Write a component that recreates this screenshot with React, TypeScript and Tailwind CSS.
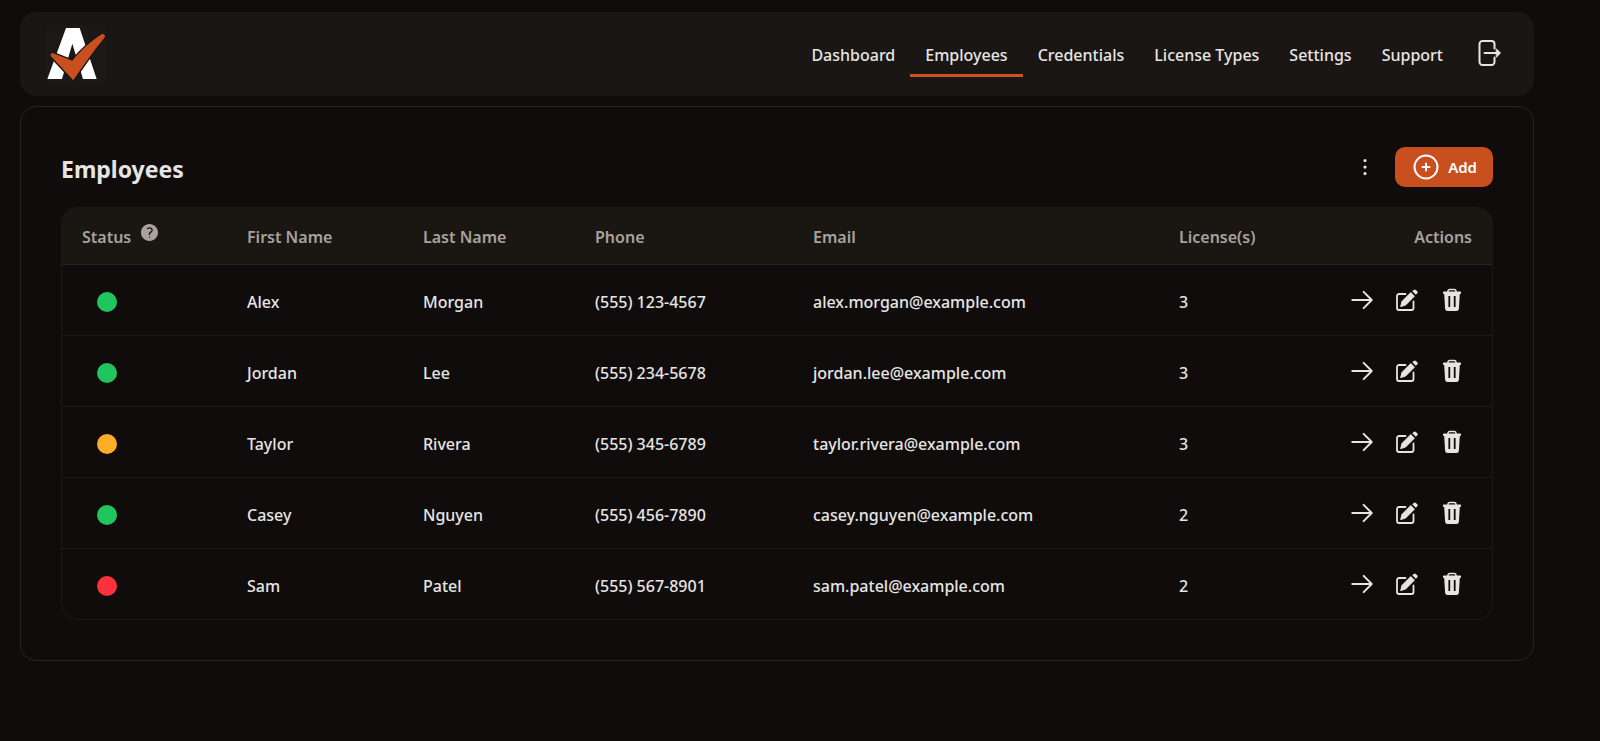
import type { ReactNode } from "react";
import {
  HiEllipsisVertical,
  HiOutlineArrowRight,
  HiQuestionMarkCircle,
} from "react-icons/hi2";

type Status = "valid" | "expiring" | "expired";

interface Employee {
  status: Status;
  first: string;
  last: string;
  phone: string;
  email: string;
  licenses: number;
}

const employees: Employee[] = [
  { status: "valid", first: "Alex", last: "Morgan", phone: "(555) 123-4567", email: "alex.morgan@example.com", licenses: 3 },
  { status: "valid", first: "Jordan", last: "Lee", phone: "(555) 234-5678", email: "jordan.lee@example.com", licenses: 3 },
  { status: "expiring", first: "Taylor", last: "Rivera", phone: "(555) 345-6789", email: "taylor.rivera@example.com", licenses: 3 },
  { status: "valid", first: "Casey", last: "Nguyen", phone: "(555) 456-7890", email: "casey.nguyen@example.com", licenses: 2 },
  { status: "expired", first: "Sam", last: "Patel", phone: "(555) 567-8901", email: "sam.patel@example.com", licenses: 2 },
];

const statusColor: Record<Status, string> = {
  valid: "bg-[#21c55d]",
  expiring: "bg-[#faad26]",
  expired: "bg-[#fb323b]",
};

const navItems = ["Dashboard", "Employees", "Credentials", "License Types", "Settings", "Support"];

function Logo() {
  return (
    <svg viewBox="33 30 180 174" className="h-[58px] w-15" aria-hidden="true">
      <rect x="33" y="30" width="180" height="174" rx="14" fill="#1a1918" />
      <path d="M93 39h41l51 153h-41L112 86 81 192H37z" fill="#fff" />
      <path
        d="M53 114 112 137C135 108 168 78 201 57q9-1 9 9C178 104 146 150 115 196L47 123q-1-9 6-9z"
        fill="#c94f1e"
        stroke="#191613"
        strokeWidth="8"
        paintOrder="stroke"
        strokeLinejoin="round"
      />
    </svg>
  );
}

function LogoutIcon() {
  return (
    <svg viewBox="0 0 24 26" className="h-[26px] w-6" fill="none" stroke="currentColor" strokeWidth="2" strokeLinecap="round" aria-hidden="true">
      <path d="M16.500 8.500V4a3 3 0 0 0-3-3h-9a3 3 0 0 0-3 3v18a3 3 0 0 0 3 3h9a3 3 0 0 0 3-3v-4.500" />
      <path d="M6.500 13h14" />
      <path d="M18.500 9 22.500 13l-4 4z" fill="currentColor" strokeWidth="1" strokeLinejoin="round" />
    </svg>
  );
}

function EditIcon() {
  return (
    <svg viewBox="0 0 22 22" className="size-[22px]" aria-hidden="true">
      <path
        d="M9.500 5H3a2 2 0 0 0-2 2v12a2 2 0 0 0 2 2h12.500a2 2 0 0 0 2-2v-6.500"
        fill="none"
        stroke="currentColor"
        strokeWidth="1.800"
        strokeLinecap="round"
      />
      <path d="M14.800 3.600 18.400 7.200 9.600 16 4.700 17.600 6 12.400z" fill="currentColor" stroke="currentColor" strokeWidth="1" strokeLinejoin="round" />
      <path d="M16.300 2.200 17.700.9a1.600 1.600 0 0 1 2.200 0l1.300 1.300a1.600 1.600 0 0 1 0 2.200L19.800 5.700z" fill="currentColor" />
    </svg>
  );
}

function TrashIcon() {
  return (
    <svg viewBox="0 0 20 24" className="h-6 w-5" aria-hidden="true">
      <path d="M6 4V3.200A1.700 1.700 0 0 1 7.700 1.500h4.600A1.700 1.700 0 0 1 14 3.200V4" fill="none" stroke="currentColor" strokeWidth="1.500" />
      <path
        fillRule="evenodd"
        fill="currentColor"
        d="M1.800 3.500h16.400a.8.800 0 0 1 .8.800v.9a.8.800 0 0 1-.8.800h-.4L16.900 20.700a2.500 2.500 0 0 1-2.500 2.300H5.600a2.500 2.500 0 0 1-2.500-2.300L2.200 6h-.4a.8.800 0 0 1-.8-.8v-.9a.8.800 0 0 1 .8-.8zM6.400 8v11h1.800V8zM11.800 8v11h1.800V8z"
      />
    </svg>
  );
}

function PlusCircleIcon() {
  return (
    <svg viewBox="0 0 26 26" className="size-[26px]" fill="none" stroke="currentColor" strokeWidth="2" strokeLinecap="round" aria-hidden="true">
      <circle cx="13" cy="13" r="11.500" />
      <path d="M13 9.500v7M9.500 13h7" />
    </svg>
  );
}

function IconButton({ label, children }: { label: string; children: ReactNode }) {
  return (
    <button type="button" aria-label={label} className="flex h-7 w-[45px] items-center justify-center text-stone-200">
      {children}
    </button>
  );
}

export default function App() {
  return (
    <div className="min-h-screen bg-[#0f0c0b] pt-3 pr-[66px] pb-20 pl-5 font-['Noto_Sans','Open_Sans',sans-serif] text-base font-medium text-stone-200">
      <header className="flex h-[84px] items-center justify-between rounded-2xl bg-[#191613] pr-6 pl-[26px]">
        <a href="#home" aria-label="Home">
          <Logo />
        </a>
        <div className="flex items-center pb-[3px]">
          <nav className="flex">
            {navItems.map((item) => (
              <a
                key={item}
                href="#nav"
                aria-current={item === "Employees" ? "page" : undefined}
                className={
                  item === "Employees"
                    ? "border-b-3 border-[#d0521f] px-[15px] pt-[14px] pb-[7px]"
                    : "border-b-3 border-transparent px-[15px] pt-[14px] pb-[7px]"
                }
              >
                {item}
              </a>
            ))}
          </nav>
          <button type="button" aria-label="Log out" className="ml-3 flex size-10 items-center justify-center">
            <LogoutIcon />
          </button>
        </div>
      </header>

      <main className="mt-[10px] rounded-2xl border border-[#262321] p-10">
        <div className="flex h-10 items-center justify-between">
          <h1 className="pt-1 text-[23px] font-bold">Employees</h1>
          <div className="flex items-center gap-4">
            <button type="button" aria-label="More options" className="flex size-7 items-center justify-center">
              <HiEllipsisVertical size={26} />
            </button>
            <button type="button" className="flex h-10 items-center gap-[9px] rounded-[10px] bg-[#c94f1e] pr-4 pl-[18px] text-[15px] font-semibold text-white">
              <PlusCircleIcon />
              Add
            </button>
          </div>
        </div>

        <div className="mt-5 overflow-hidden rounded-2xl border border-[#1c1917]">
          <table className="w-full table-fixed border-collapse text-left">
            <colgroup>
              <col className="w-[165px]" />
              <col className="w-[176px]" />
              <col className="w-[172px]" />
              <col className="w-[218px]" />
              <col className="w-[366px]" />
              <col className="w-[150px]" />
              <col />
            </colgroup>
            <thead className="bg-[#1a1612] text-[#a8a29e]">
              <tr className="h-14 border-b border-[#262321] [&>th]:px-5 [&>th]:pt-0.5 [&>th]:font-semibold">
                <th scope="col">
                  <span className="flex items-center gap-2">
                    Status
                    <button type="button" aria-label="About status" className="-mt-2">
                      <HiQuestionMarkCircle size={21} />
                    </button>
                  </span>
                </th>
                <th scope="col">First Name</th>
                <th scope="col">Last Name</th>
                <th scope="col">Phone</th>
                <th scope="col">Email</th>
                <th scope="col">License(s)</th>
                <th scope="col" className="text-right">Actions</th>
              </tr>
            </thead>
            <tbody>
              {employees.map((e) => (
                <tr key={e.email} className="h-[71px] border-b border-[#1c1917] last:border-b-0">
                  <td className="px-5 pt-1">
                    <span role="img" aria-label={e.status} className={`ml-[15px] block size-5 rounded-full ${statusColor[e.status]}`} />
                  </td>
                  <td className="px-5 pt-1">{e.first}</td>
                  <td className="px-5 pt-1">{e.last}</td>
                  <td className="px-5 pt-1">{e.phone}</td>
                  <td className="px-5 pt-1">{e.email}</td>
                  <td className="px-5 pt-1">{e.licenses}</td>
                  <td className="pr-[18px]">
                    <div className="flex justify-end">
                      <IconButton label={`View ${e.first}`}>
                        <HiOutlineArrowRight size={26} strokeWidth={1.8} />
                      </IconButton>
                      <IconButton label={`Edit ${e.first}`}>
                        <EditIcon />
                      </IconButton>
                      <IconButton label={`Delete ${e.first}`}>
                        <TrashIcon />
                      </IconButton>
                    </div>
                  </td>
                </tr>
              ))}
            </tbody>
          </table>
        </div>
      </main>
    </div>
  );
}
